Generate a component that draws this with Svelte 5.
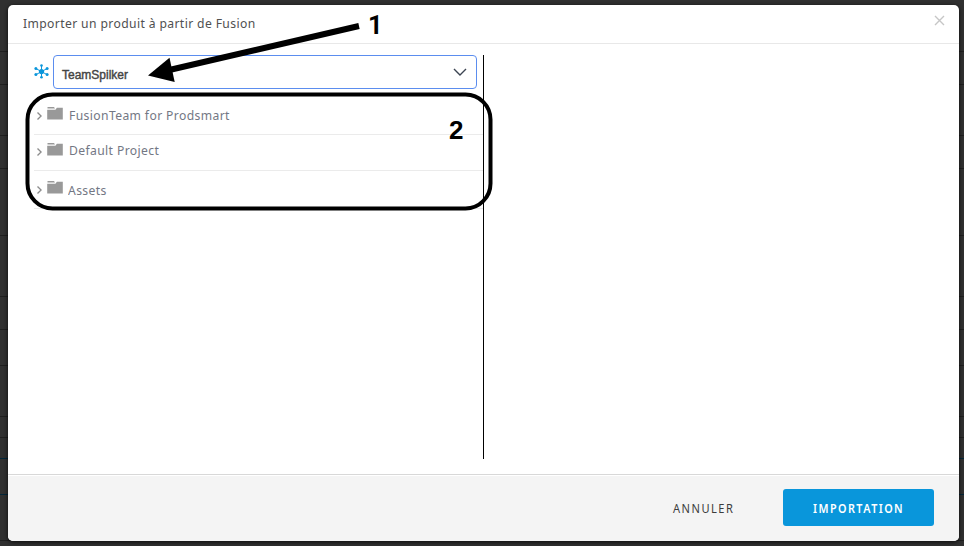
<script>
  const projects = [
    { name: 'FusionTeam for Prodsmart', cls: 'first' },
    { name: 'Default Project', cls: 'second' },
    { name: 'Assets', cls: 'third' }
  ];
  const backdropRows = [51, 84, 135, 168, 235, 296, 329, 365, 416, 437, 540];
  const accentRows = [458, 494];
</script>

<div class="page">
  <svg class="backdrop" width="964" height="546" aria-hidden="true">
    {#each backdropRows as y}<rect x="0" {y} width="964" height="1" fill="#1f1f1f" />{/each}
    {#each accentRows as y}<rect x="0" {y} width="964" height="1" fill="#02263a" />{/each}
  </svg>

  <div class="modal" role="dialog" aria-label="Importer un produit à partir de Fusion">
    <header>
      <span class="title">Importer un produit à partir de Fusion</span>
      <button class="close" aria-label="Fermer">
        <svg width="11" height="11" viewBox="0 0 11 11"><path d="M1 1 10 10M10 1 1 10" stroke="#c6c6c6" stroke-width="1.4" fill="none" /></svg>
      </button>
    </header>

    <main>
      <section class="left">
        <div class="picker">
          <svg class="hub" width="15" height="15" viewBox="0 0 15 15">
            <g stroke="#0b96db" stroke-width="1" fill="#0b96db">
              <path d="M7.5 1.5v12M2 4.6l11 6M13 4.6 2 10.6" />
              <g stroke="none">
                <circle cx="7.5" cy="7.6" r="2.6" /><circle cx="7.5" cy="1.5" r="1.3" /><circle cx="7.5" cy="13.3" r="1.3" />
                <circle cx="1.9" cy="4.6" r="1.5" /><circle cx="13.1" cy="4.6" r="1.5" />
                <circle cx="1.9" cy="10.6" r="1.5" /><circle cx="13.1" cy="10.6" r="1.5" />
              </g>
            </g>
          </svg>
          <div class="select">
            <span>TeamSpilker</span>
            <svg width="14" height="8" viewBox="0 0 14 8"><path d="M1 1l6 6 6-6" fill="none" stroke="#3c4452" stroke-width="1.4" /></svg>
          </div>
        </div>
        <ul>
          {#each projects as p}
            <li class={p.cls}>
              <svg class="chev" width="5" height="8" viewBox="0 0 5 8"><path d="M.5.5 4.1 4 .5 7.5" fill="none" stroke="#8c8c8c" stroke-width="1.4" /></svg>
              <svg class="folder" width="16" height="13" viewBox="0 0 16 13"><path d="M.5 0H7l1 1.6H.5zM.2 2.8H8.4L9.9.8H15.8V12.4H.2z" fill="#999" /></svg>
              <span>{p.name}</span>
            </li>
          {/each}
        </ul>
      </section>
      <section class="right"></section>
    </main>

    <footer>
      <button class="cancel"><span>ANNULER</span></button>
      <button class="import"><span>IMPORTATION</span></button>
    </footer>
  </div>

  <svg class="notes" width="964" height="546">
    <rect x="27.5" y="94.5" width="463" height="114" rx="25" fill="none" stroke="#000" stroke-width="4" />
    <path d="M359 26 165 71" stroke="#000" stroke-width="6" />
    <path d="M148 75.5 169.5 57.7 174.7 82z" />
    <text class="one" x="368" y="34">1</text>
    <text x="449" y="139">2</text>
  </svg>
</div>

<style>
  :global(body) { margin: 0; overflow: hidden; }
  .page { position: relative; width: 964px; height: 546px; box-sizing: border-box; padding: 5px 5px 5px 8px; background: #303030; font-family: "Noto Sans", sans-serif; }
  .backdrop, .notes { position: absolute; left: 0; top: 0; pointer-events: none; }
  .notes text { font: bold 26px "Liberation Sans", sans-serif; }
  .notes .one { font: bold 25.5px Roboto, sans-serif; }
  .modal { position: relative; display: flex; flex-direction: column; width: 951px; height: 536px; background: #fff; border-radius: 5px; overflow: hidden; box-shadow: 0 1px 4px rgba(0, 0, 0, .8); }
  header { display: flex; justify-content: space-between; box-sizing: border-box; height: 39px; padding: 9px 14px 0 15px; border-bottom: 1px solid #e8e8e8; }
  .title { font-size: 13px; line-height: 18px; color: #505050; }
  .title, li span { letter-spacing: .4px; transform: scaleX(.935); transform-origin: 0 50%; white-space: nowrap; }
  button { border: 0; background: none; padding: 0; font-family: inherit; }
  .close { height: 11px; display: flex; margin-top: 1px; }
  main { display: flex; height: 430px; box-sizing: border-box; padding-top: 11px; }
  .left { width: 475px; height: 404px; border-right: 1px solid #000; }
  .right { flex: 1; }
  .picker { display: flex; padding-left: 26px; }
  .hub { margin: 9px 4px 0 0; }
  .select { display: flex; justify-content: space-between; box-sizing: border-box; width: 424px; height: 34px; border: 1px solid #5b8def; border-radius: 4px; padding: 0 9px 0 8px; }
  .select span { margin-top: 12px; font: 12px/14px "Liberation Sans", sans-serif; color: #444; -webkit-text-stroke: .4px #444; }
  .select svg { margin-top: 12px; }
  ul { list-style: none; margin: 11px 0 0 26px; padding: 0; }
  li { display: flex; box-sizing: border-box; border-bottom: 1px solid #ebebeb; color: #737784; font-size: 13px; line-height: 18px; }
  li .chev { margin: 12px 5px 0 3px; }
  li .folder { margin-top: 7px; }
  .first { height: 35px; }
  .first span { margin: 6px 0 0 6px; }
  .second { height: 36px; }
  .second .folder { margin-top: 8px; }
  .second .chev { margin-top: 13px; }
  .second span { margin: 6px 0 0 6px; }
  .third { height: 38px; }
  .third .folder { margin-top: 10px; }
  .third .chev { margin-top: 15px; }
  .third span { margin: 10px 0 0 5px; }
  footer { display: flex; flex: 1; align-items: flex-start; justify-content: flex-end; box-sizing: border-box; border-top: 1px solid #d8d8d8; box-shadow: inset 0 1px #fff; background: #f4f4f4; padding: 14px 25px 0 0; }
  footer span { display: inline-block; letter-spacing: 1.6px; }
  .cancel { height: 37px; margin-right: 49px; padding-top: 2px; color: #3c3c3c; font-size: 12px; }
  .cancel span { transform: scaleX(.925); transform-origin: 100% 50%; }
  .import { width: 151px; height: 37px; padding-top: 2px; border-radius: 3px; background: #0996db; color: #fff; font-size: 12px; font-weight: 600; }
  .import span { transform: scaleX(.9); }
</style>
